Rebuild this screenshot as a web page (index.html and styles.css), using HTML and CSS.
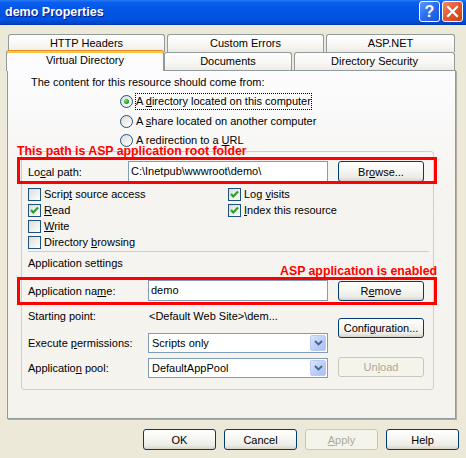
FILE: index.html
```html
<!DOCTYPE html>
<html>
<head>
<meta charset="utf-8">
<link rel="stylesheet" href="styles.css">
</head>
<body>
<div class="titlebar">
  <span class="title-text">demo Properties</span>
  <div class="caption-btns">
    <span class="cbtn cbtn-help">?</span>
    <span class="cbtn cbtn-close"><svg width="13" height="13" viewBox="0 0 13 13"><path d="M2 2 L11 11 M11 2 L2 11" stroke="#fff" stroke-width="2.2" stroke-linecap="square"/></svg></span>
  </div>
</div>
<div class="client">
  <div class="tabs">
    <div class="tabrow row1">
      <div class="tab w-http">HTTP Headers</div>
      <div class="tab w-errors">Custom Errors</div>
      <div class="tab w-aspnet">ASP.NET</div>
    </div>
    <div class="tabrow row2">
      <div class="tab sel w-vdir">Virtual Directory</div>
      <div class="tab w-docs">Documents</div>
      <div class="tab w-dsec">Directory Security</div>
    </div>
  </div>
  <div class="panel">
    <p class="intro">The content for this resource should come from:</p>
    <div class="radios">
      <div class="radio-row"><span class="radio on"></span><span class="rlabel focus">A <u>d</u>irectory located on this computer</span></div>
      <div class="radio-row"><span class="radio"></span><span class="rlabel">A <u>s</u>hare located on another computer</span></div>
      <div class="radio-row last"><span class="radio"></span><span class="rlabel">A redirection to a <u>U</u>RL</span></div>
    </div>
    <div class="group">
      <div class="row-local">
        <span class="lbl lbl-local">Lo<u>c</u>al path:</span>
        <span class="input input-local">C:\Inetpub\wwwroot\demo\</span>
        <button class="btn btn-side">Br<u>o</u>wse...</button>
      </div>
      <div class="checks">
        <div class="check"><span class="cb"></span><span>Scrip<u>t</u> source access</span></div>
        <div class="check"><span class="cb on"><svg width="11" height="11" viewBox="0 0 11 11"><path d="M2 5 L4.3 7.5 L9 2.5" fill="none" stroke="#21A121" stroke-width="2"/></svg></span><span>Log <u>v</u>isits</span></div>
        <div class="check"><span class="cb on"><svg width="11" height="11" viewBox="0 0 11 11"><path d="M2 5 L4.3 7.5 L9 2.5" fill="none" stroke="#21A121" stroke-width="2"/></svg></span><span><u>R</u>ead</span></div>
        <div class="check"><span class="cb on"><svg width="11" height="11" viewBox="0 0 11 11"><path d="M2 5 L4.3 7.5 L9 2.5" fill="none" stroke="#21A121" stroke-width="2"/></svg></span><span><u>I</u>ndex this resource</span></div>
        <div class="check"><span class="cb"></span><span><u>W</u>rite</span></div>
        <div class="check empty"></div>
        <div class="check"><span class="cb"></span><span>Directory <u>b</u>rowsing</span></div>
      </div>
      <div class="sep"></div>
      <div class="appset">Application settings</div>
      <div class="row-app">
        <span class="lbl lbl-wide">Application na<u>m</u>e:</span>
        <span class="input input-app">demo</span>
        <button class="btn btn-side btn-remove">R<u>e</u>move</button>
      </div>
      <div class="lower">
        <div class="lower-left">
          <div class="sp-row"><span class="lbl lbl-sp">Starting point:</span><span>&lt;Default Web Site&gt;\dem...</span></div>
          <div class="sel-row first">
            <span class="lbl lbl-wide">Execute <u>p</u>ermissions:</span>
            <span class="select"><span>Scripts only</span><span class="arrow"><svg width="9" height="6" viewBox="0 0 9 6"><path d="M1 1 L4.5 4.5 L8 1" fill="none" stroke="#4D6185" stroke-width="1.8"/></svg></span></span>
          </div>
          <div class="sel-row">
            <span class="lbl lbl-wide">Applicatio<u>n</u> pool:</span>
            <span class="select"><span>DefaultAppPool</span><span class="arrow"><svg width="9" height="6" viewBox="0 0 9 6"><path d="M1 1 L4.5 4.5 L8 1" fill="none" stroke="#4D6185" stroke-width="1.8"/></svg></span></span>
          </div>
        </div>
        <div class="lower-right">
          <button class="btn btn-side btn-config">Confi<u>g</u>uration...</button>
          <button class="btn btn-side btn-unload dis">Un<u>l</u>oad</button>
        </div>
      </div>
    </div>
  </div>
  <div class="buttons">
    <button class="btn btn-main">OK</button>
    <button class="btn btn-main">Cancel</button>
    <button class="btn btn-main dis"><u>A</u>pply</button>
    <button class="btn btn-main">Help</button>
  </div>
</div>
<div class="note note1">This path is ASP application root folder</div>
<div class="redbox box1"></div>
<div class="note note2">ASP application is enabled</div>
<div class="redbox box2"></div>
</body>
</html>
```
FILE: styles.css
```css
* { box-sizing: border-box; }
html, body { margin: 0; padding: 0; }
body {
  position: relative;
  width: 466px;
  height: 458px;
  overflow: hidden;
  background: #ECE9D8;
  font-family: "Liberation Sans", Arial, sans-serif;
  font-size: 11px;
  color: #000;
}
u { text-decoration: underline; text-underline-offset: 1px; }

.titlebar {
  height: 25px;
  background: linear-gradient(to bottom, #2A7AF5 0%, #0A5EEE 10%, #0055E5 45%, #0052E0 80%, #0043C4 94%, #0034A8 100%);
  display: flex;
  align-items: center;
  justify-content: space-between;
  padding: 0 3px 0 5px;
}
.title-text {
  color: #fff;
  font-weight: bold;
  font-size: 12.5px;
  text-shadow: 1px 1px 0 #0A1883;
  margin-top: -1px;
}
.caption-btns { display: flex; gap: 2px; margin-top: -2px; }
.cbtn {
  width: 21px;
  height: 21px;
  border: 1px solid #fff;
  border-radius: 3px;
  display: flex;
  align-items: center;
  justify-content: center;
  color: #fff;
}
.cbtn-help {
  background: linear-gradient(135deg, #5C9CFB 0%, #2A6CF0 50%, #1A55D8 100%);
  font-weight: bold;
  font-size: 16px;
}
.cbtn-close {
  background: linear-gradient(135deg, #F08A68 0%, #E2582C 50%, #C94114 100%);
}

.client { padding-top: 9px; }

.tabs { margin-left: 6px; position: relative; z-index: 2; }
.tabrow { display: flex; height: 18px; }
.row1 { padding-left: 2px; gap: 2px; }
.row2 { align-items: flex-end; }
.tab {
  height: 18px;
  border: 1px solid #919B9C;
  border-bottom: none;
  border-radius: 3px 3px 0 0;
  background: linear-gradient(#FFFFFF, #F8F7F3 60%, #ECEBE6);
  text-align: center;
  line-height: 17px;
}
.tab.sel {
  height: 21px;
  margin-bottom: -1px;
  background: #FCFCFE;
  border-top: 1px solid #E68B2C;
  box-shadow: inset 0 2px 0 #FFC73C;
  line-height: 19px;
  position: relative;
  z-index: 3;
}
.w-http { width: 157px; }
.w-errors { width: 157px; }
.w-aspnet { width: 129px; }
.w-vdir { width: 158px; }
.w-docs { width: 128px; }
.w-dsec { width: 161px; margin-left: 2px; }

.panel {
  margin-left: 7px;
  width: 449px;
  height: 349px;
  border: 1px solid #919B9C;
  background: linear-gradient(#FCFCFE, #F5F4F0 35%, #F4F3EE);
  box-shadow: 1px 1px 0 #B0AEA3;
  padding-top: 4px;
}
.intro { margin: 0 0 0 23px; line-height: 14px; }

.radios { margin: 2px 0 0 112px; }
.radio-row { display: flex; align-items: center; height: 20px; gap: 3px; }
.radio-row.last { height: 18px; }
.radio {
  width: 13px;
  height: 13px;
  border: 1px solid #1C5180;
  border-radius: 50%;
  background: linear-gradient(135deg, #DCDCD7, #FFFFFF);
  display: flex;
  align-items: center;
  justify-content: center;
}
.radio.on::after {
  content: "";
  width: 5px;
  height: 5px;
  border-radius: 50%;
  background: radial-gradient(circle at 35% 35%, #7BE07B, #21A121 60%, #1A8A1A);
}
.rlabel { line-height: 13px; }
.rlabel.focus { border: 1px dotted #000; padding: 1px 0; margin-left: -1px; }

.group {
  margin: 2px 0 0 13px;
  width: 413px;
  height: 239px;
  border: 1px solid #D0D0BF;
  border-radius: 3px;
  padding: 9px 0 0 6px;
}
.lbl { flex: none; }
.lbl-local { width: 100px; }
.lbl-wide { width: 120px; }
.lbl-sp { width: 121px; }

.row-local, .row-app { display: flex; align-items: center; height: 21px; }
.input {
  height: 21px;
  border: 1px solid #7F9DB9;
  background: #fff;
  padding-left: 2px;
  line-height: 19px;
  white-space: nowrap;
}
.input-local { width: 200px; }
.input-app { width: 180px; }

.btn {
  font-family: inherit;
  font-size: 11px;
  color: #000;
  height: 21px;
  border: 1px solid #003C74;
  border-radius: 3px;
  background: linear-gradient(#FFFFFF, #F6F6F2 45%, #EDECE7 80%, #D8D3C8);
  padding: 0;
  display: flex;
  align-items: center;
  justify-content: center;
}
.btn.dis {
  border-color: #C9C7BA;
  color: #ACA899;
  background: #F5F4EA;
}
.btn-side { width: 86px; margin-left: 10px; }
.btn-remove { height: 20px; }

.checks {
  display: grid;
  grid-template-columns: 200px 200px;
  grid-auto-rows: 16px;
  margin-top: 4px;
}
.check { display: flex; align-items: center; gap: 3px; }
.cb {
  width: 13px;
  height: 13px;
  border: 1px solid #1C5180;
  background: linear-gradient(135deg, #DCDCD7, #FFFFFF);
  display: flex;
  align-items: center;
  justify-content: center;
}

.sep { width: 401px; height: 1px; background: #D0D0BF; margin-top: 1px; }
.appset { margin-top: 4px; line-height: 14px; }
.row-app { margin-top: 10px; }

.lower { display: flex; margin-top: 8px; }
.lower-left { width: 300px; }
.sp-row { display: flex; line-height: 14px; }
.sel-row { display: flex; align-items: center; height: 20px; margin-top: 5px; }
.sel-row.first { margin-top: 10px; }
.select {
  width: 180px;
  height: 20px;
  border: 1px solid #7F9DB9;
  background: #fff;
  display: flex;
  align-items: center;
  justify-content: space-between;
  padding: 0 1px 0 3px;
}
.arrow {
  width: 16px;
  height: 16px;
  border: 1px solid #B9CBF3;
  border-radius: 2px;
  background: linear-gradient(135deg, #DCE6FD, #B7CCF9 60%, #A9C1F6);
  display: flex;
  align-items: center;
  justify-content: center;
}
.lower-right { margin-left: 10px; width: 86px; }
.lower-right .btn-side { margin-left: 0; }
.btn-config { height: 20px; margin-top: 9px; }
.btn-unload { height: 20px; margin-top: 19px; }

.buttons {
  display: flex;
  justify-content: flex-end;
  gap: 8px;
  padding-right: 7px;
  margin-top: 10px;
}
.btn-main { width: 73px; }

.note {
  position: absolute;
  color: #FF0000;
  font-weight: bold;
  font-size: 12.3px;
  line-height: 10px;
  white-space: nowrap;
}
.note1 { left: 17px; top: 146px; }
.note2 { right: 29px; top: 266px; }
.redbox { position: absolute; border: 3px solid #FF0000; }
.box1 { left: 17px; top: 157px; width: 420px; height: 27px; }
.box2 { left: 17px; top: 277px; width: 420px; height: 28px; }
```
